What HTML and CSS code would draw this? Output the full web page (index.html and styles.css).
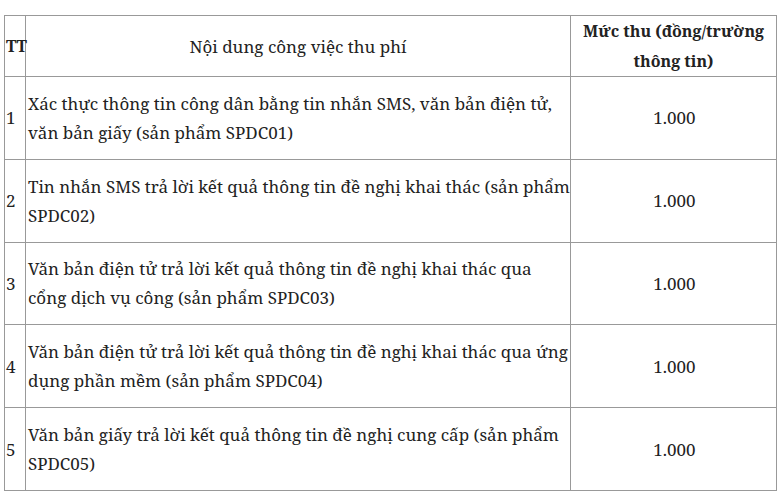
FILE: index.html
```html
<!DOCTYPE html>
<html lang="vi">
<head>
<meta charset="utf-8">
<link rel="stylesheet" href="styles.css">
</head>
<body>
<table class="fee-table">
  <colgroup>
    <col class="c-tt">
    <col class="c-desc">
    <col class="c-fee">
  </colgroup>
  <thead>
    <tr>
      <th class="tt head">TT</th>
      <th class="desc-head">Nội dung công việc thu phí</th>
      <th class="fee-head">Mức thu (đồng/trường thông tin)</th>
    </tr>
  </thead>
  <tbody>
    <tr>
      <td class="tt">1</td>
      <td class="desc">Xác thực thông tin công dân bằng tin nhắn SMS, văn bản điện tử, văn bản giấy (sản phẩm SPDC01)</td>
      <td class="fee">1.000</td>
    </tr>
    <tr>
      <td class="tt">2</td>
      <td class="desc">Tin nhắn SMS trả lời kết quả thông tin đề nghị khai thác (sản phẩm SPDC02)</td>
      <td class="fee">1.000</td>
    </tr>
    <tr>
      <td class="tt">3</td>
      <td class="desc">Văn bản điện tử trả lời kết quả thông tin đề nghị khai thác qua cổng dịch vụ công (sản phẩm SPDC03)</td>
      <td class="fee">1.000</td>
    </tr>
    <tr>
      <td class="tt">4</td>
      <td class="desc">Văn bản điện tử trả lời kết quả thông tin đề nghị khai thác qua ứng dụng phần mềm (sản phẩm SPDC04)</td>
      <td class="fee">1.000</td>
    </tr>
    <tr>
      <td class="tt">5</td>
      <td class="desc">Văn bản giấy trả lời kết quả thông tin đề nghị cung cấp (sản phẩm SPDC05)</td>
      <td class="fee">1.000</td>
    </tr>
  </tbody>
</table>
</body>
</html>
```
FILE: styles.css
```css
html, body {
  margin: 0;
  background: #fff;
}
body {
  padding: 15px 0 0 4px;
  font-family: "Noto Serif", "DejaVu Serif", "Liberation Serif", serif;
  font-size: 17px;
  color: #222;
}
.fee-table {
  border-collapse: collapse;
  width: 772px;
  table-layout: fixed;
}
.c-tt { width: 21px; }
.c-desc { width: 545px; }
.c-fee { width: 206px; }
th, td {
  border: 1px solid #999;
  vertical-align: middle;
  line-height: 29px;
}
th {
  height: 60px;
  padding: 0 1px;
  font-weight: normal;
  box-sizing: border-box;
}
.tt {
  padding: 0 0 0 1px;
  text-align: left;
}
th.tt {
  font-weight: bold;
  font-size: 16px;
}
.desc-head { text-align: center; }
.fee-head {
  font-weight: bold;
  font-size: 16px;
  line-height: 30px;
  text-align: center;
}
td {
  height: 82.8px;
  padding: 0 0 0 2px;
  box-sizing: border-box;
}
.desc { text-align: left; }
.fee { text-align: center; }
```
